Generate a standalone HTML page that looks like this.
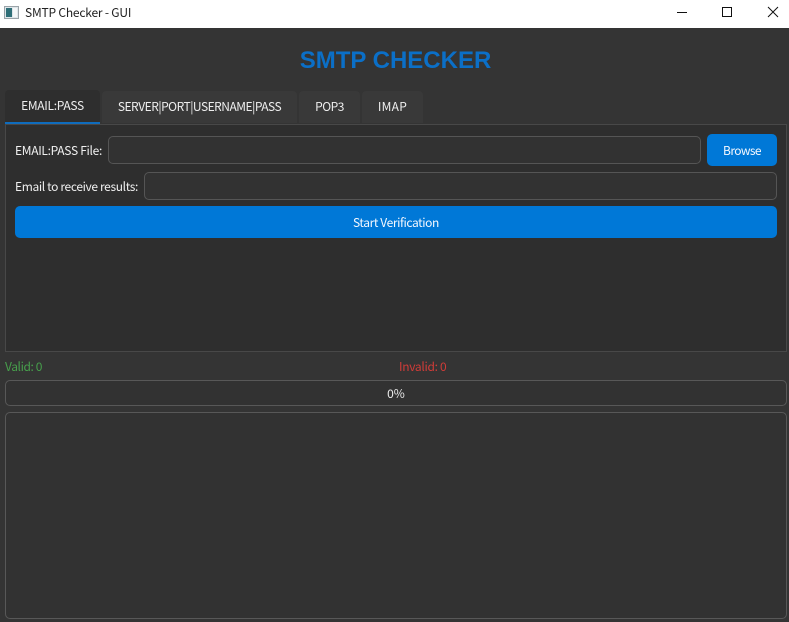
<!DOCTYPE html>
<html><head><meta charset="utf-8"><style>
*{box-sizing:border-box;margin:0;padding:0}
html,body{width:789px;height:622px;overflow:hidden;background:#333}
body{position:relative;font-family:"Noto Sans CJK SC","Liberation Sans",sans-serif;font-size:12px;color:#f0f0f0}
div{position:absolute}
.t{white-space:nowrap;line-height:16px;height:16px}
.tab{top:91px;height:32px;background:#393939;border-radius:4px 4px 0 0;text-align:center;line-height:32px;color:#eee}
.in{border:1px solid #555;border-radius:5px;background:#323232}
.btn{background:#0078d7;border-radius:5px;text-align:center;color:#f4f8ff}
</style></head><body>
<div style="left:0;top:0;width:789px;height:28px;background:#fff"></div>
<svg style="position:absolute;left:4px;top:5px" width="16" height="16" viewBox="0 0 16 16"><rect x=".5" y="1.5" width="14" height="12" fill="#dfe6ea" stroke="#9aa3a8"/><rect x="2" y="3" width="6" height="9" fill="#2f6f78"/><rect x="9" y="3" width="4" height="9" fill="#f4f7f8"/></svg>
<div class="t" style="left:25px;top:5px;color:#222;font-size:12px;letter-spacing:-.2px">SMTP Checker - GUI</div>
<svg style="position:absolute;left:670px;top:0" width="119" height="28" viewBox="0 0 119 28" fill="none" stroke="#111"><path d="M7 12.5H17"/><rect x="52.5" y="7.5" width="9" height="9"/><path d="M98 7L108 17M108 7L98 17"/></svg>

<div style="left:0;top:28px;width:789px;height:594px;background:#343434"></div>
<div class="t" style="left:0;top:46px;width:791px;height:30px;line-height:30px;text-align:center;font-family:'Liberation Sans',sans-serif;font-size:24px;font-weight:bold;color:#0b6fc7">SMTP CHECKER</div>

<div style="left:5px;top:124px;width:782px;height:228px;background:#2e2e2e;border:1px solid #484848"></div>
<div class="tab" style="left:5px;top:90px;width:95px;height:34px;background:#2e2e2e;border-bottom:2px solid #0f6cbd;line-height:32px;letter-spacing:-.3px">EMAIL:PASS</div>
<div class="tab" style="left:102px;width:195px;letter-spacing:-.5px">SERVER|PORT|USERNAME|PASS</div>
<div class="tab" style="left:299px;width:61px;letter-spacing:-.5px">POP3</div>
<div class="tab" style="left:362px;width:61px;letter-spacing:.3px">IMAP</div>

<div class="t" style="left:15px;top:143px;letter-spacing:-.3px">EMAIL:PASS File:</div>
<div class="in" style="left:108px;top:136px;width:593px;height:28px"></div>
<div class="btn" style="left:707px;top:134px;width:70px;height:32px;line-height:33px;letter-spacing:-.6px">Browse</div>
<div class="t" style="left:15px;top:179px;letter-spacing:-.36px">Email to receive results:</div>
<div class="in" style="left:144px;top:172px;width:633px;height:28px"></div>
<div class="btn" style="left:15px;top:206px;width:762px;height:32px;line-height:33px;letter-spacing:-.4px">Start Verification</div>

<div class="t" style="left:5px;top:359px;color:#47a04c;letter-spacing:-.4px">Valid: 0</div>
<div class="t" style="left:399px;top:359px;color:#d13c38;letter-spacing:-.3px">Invalid: 0</div>
<div class="in" style="left:5px;top:380px;width:782px;height:26px;text-align:center;line-height:25px;color:#eee;border-color:#585858">0%</div>
<div class="in" style="left:5px;top:412px;width:782px;height:207px;border-color:#585858"></div>
</body></html>
